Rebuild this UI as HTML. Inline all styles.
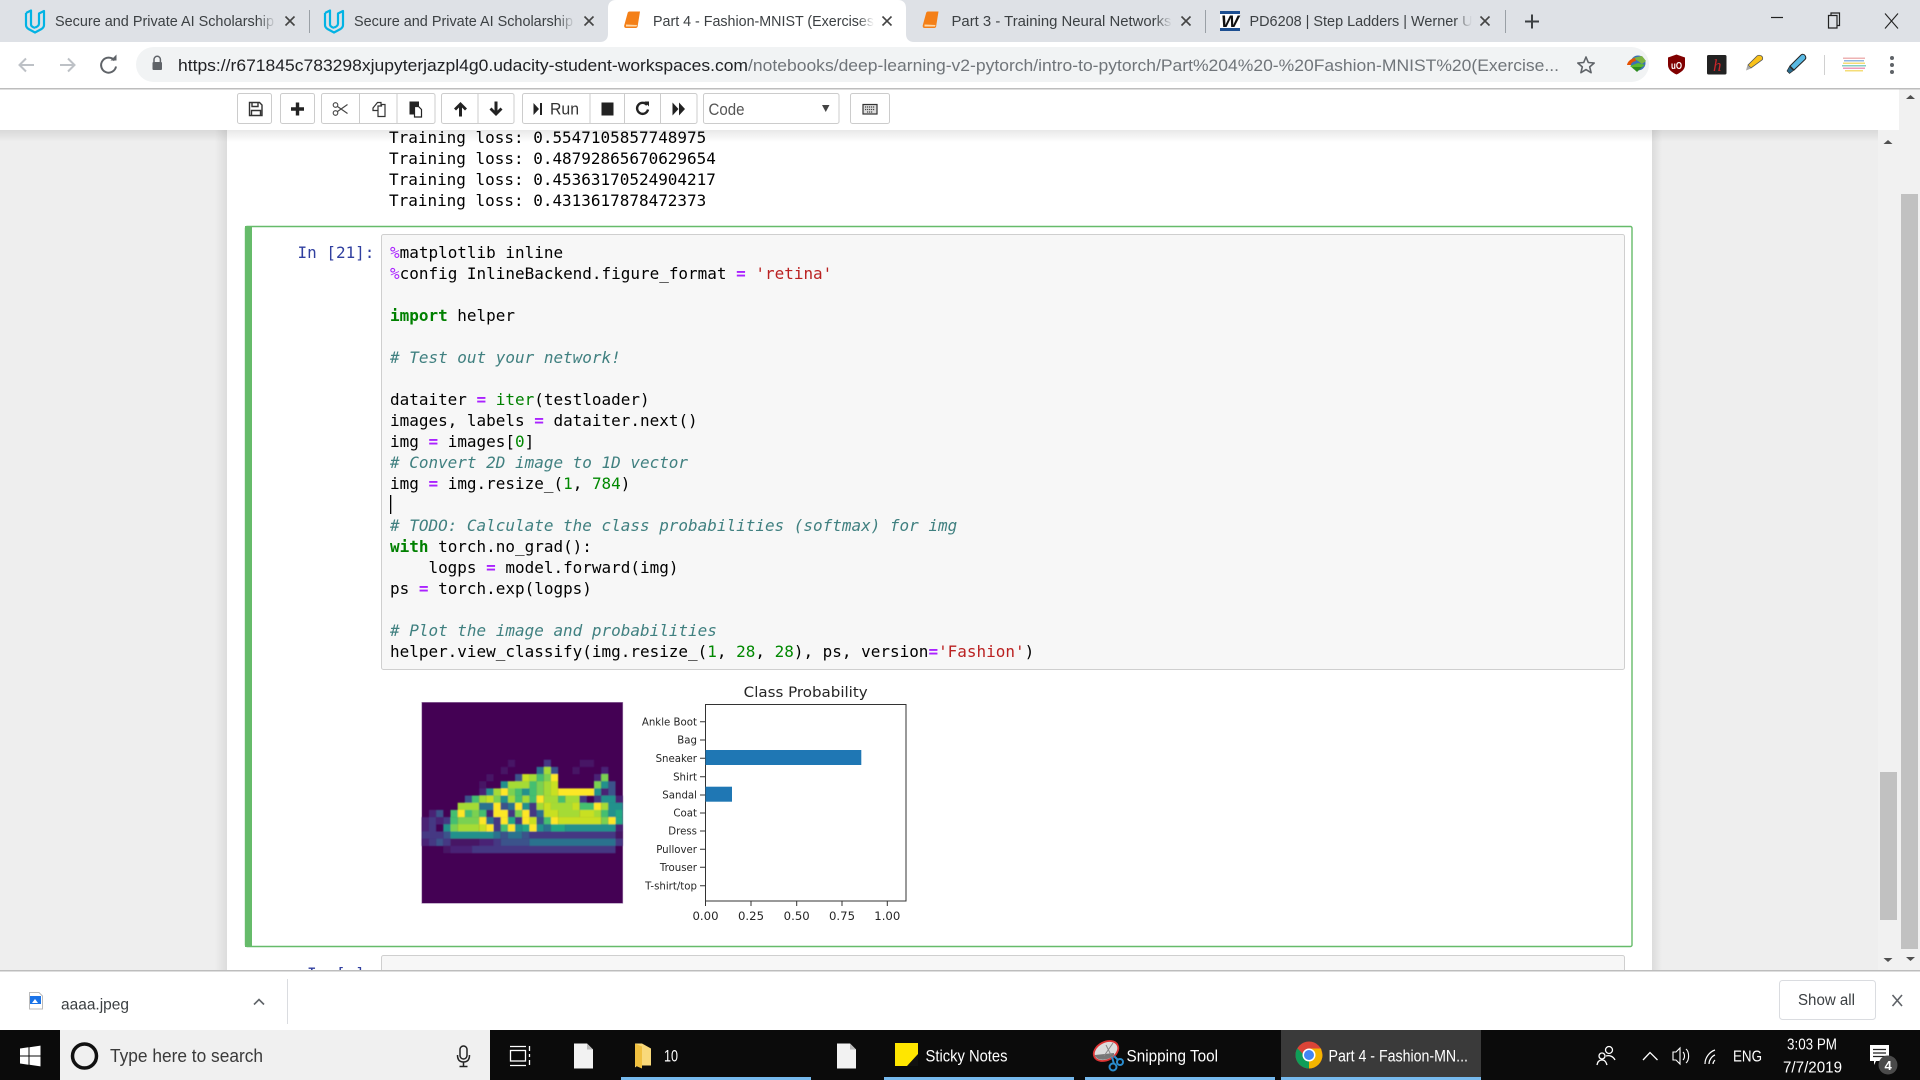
<!DOCTYPE html>
<html><head><meta charset="utf-8"><title>Part 4 - Fashion-MNIST</title>
<style>
html,body{margin:0;padding:0;width:1920px;height:1080px;overflow:hidden;background:#fff}
svg{display:block;position:absolute;left:0;top:0}
text{font-family:"Liberation Sans",sans-serif;white-space:pre}
.m{font-family:"DejaVu Sans Mono","Liberation Mono",monospace;font-size:15.97px;fill:#000}
.d{font-family:"DejaVu Sans",sans-serif;fill:#262626}
.t{font-size:15px;fill:#3c4043}
.k{fill:#008000;font-weight:bold}.o{fill:#a2f;font-weight:bold}.p{fill:#a2f}.c{fill:#408080;font-style:italic}.s{fill:#ba2121}.n{fill:#080}
.b{fill:#fff;stroke:#ccc;stroke-width:1}
.w{font-size:16.5px;fill:#fff}
.x{stroke:#444;stroke-width:1.6;fill:none}
.ps rect{height:1.03px}
.p1{fill:#471365}.p2{fill:#482475}.p3{fill:#443983}.p4{fill:#3b528b}.p5{fill:#2c728e}.p6{fill:#21918c}.p7{fill:#22a884}.p8{fill:#44bf70}.p9{fill:#7ad151}.pa{fill:#a5db36}.pb{fill:#c8e020}.pc{fill:#fde725}
</style></head><body>
<svg width="1920" height="1080" viewBox="0 0 1920 1080" xmlns="http://www.w3.org/2000/svg">
<defs>
<linearGradient id="f1" x1="0" x2="1"><stop offset="0" stop-color="#dee1e6" stop-opacity="0"/><stop offset="1" stop-color="#dee1e6"/></linearGradient>
<linearGradient id="f2" x1="0" x2="1"><stop offset="0" stop-color="#fff" stop-opacity="0"/><stop offset="1" stop-color="#fff"/></linearGradient>
<linearGradient id="sr" x1="0" x2="1"><stop offset="0" stop-color="#dcdcdc"/><stop offset="1" stop-color="#eee"/></linearGradient>
<linearGradient id="sl" x1="0" x2="1"><stop offset="0" stop-color="#eee"/><stop offset="1" stop-color="#dcdcdc"/></linearGradient>
<linearGradient id="st" x1="0" x2="0" y1="0" y2="1"><stop offset="0" stop-color="#000" stop-opacity=".09"/><stop offset="1" stop-color="#000" stop-opacity="0"/></linearGradient>
<filter id="bl" x="-2%" y="-2%" width="104%" height="104%"><feGaussianBlur stdDeviation=".09"/></filter>
</defs>

<!-- page background -->
<rect x="0" y="89" width="1920" height="881" fill="#eee"/>
<rect x="215" y="130" width="12" height="840" fill="url(#sl)"/>
<rect x="227" y="130" width="1425" height="840" fill="#fff"/>
<rect x="1652" y="130" width="10" height="840" fill="url(#sr)"/>

<!-- output -->
<text class="m" x="389" y="143">Training loss: 0.5547105857748975</text>
<text class="m" x="389" y="164">Training loss: 0.48792865670629654</text>
<text class="m" x="389" y="185">Training loss: 0.45363170524904217</text>
<text class="m" x="389" y="206">Training loss: 0.4313617878472373</text>
<rect x="0" y="130" width="1878" height="12" fill="url(#st)"/>

<!-- selected cell -->
<rect x="245.500" y="226.500" width="1386.500" height="720" fill="#fff" stroke="#66bb6a" stroke-width="1.400" rx="1.500"/>
<rect x="245" y="226" width="7" height="721" fill="#66bb6a"/>
<rect x="381.500" y="234.500" width="1243" height="435" fill="#f7f7f7" stroke="#cfcfcf" rx="2"/>
<text class="m" x="297.500" y="258" style="fill:#303f9f">In [21]:</text>

<text class="m" x="390" y="258"><tspan class="p">%</tspan>matplotlib inline</text>
<text class="m" x="390" y="279"><tspan class="p">%</tspan>config InlineBackend.figure_format <tspan class="o">=</tspan> <tspan class="s">'retina'</tspan></text>
<text class="m" x="390" y="321"><tspan class="k">import</tspan> helper</text>
<text class="m" x="390" y="363"><tspan class="c"># Test out your network!</tspan></text>
<text class="m" x="390" y="405">dataiter <tspan class="o">=</tspan> <tspan style="fill:#008000">iter</tspan>(testloader)</text>
<text class="m" x="390" y="426">images, labels <tspan class="o">=</tspan> dataiter.next()</text>
<text class="m" x="390" y="447">img <tspan class="o">=</tspan> images[<tspan class="n">0</tspan>]</text>
<text class="m" x="390" y="468"><tspan class="c"># Convert 2D image to 1D vector</tspan></text>
<text class="m" x="390" y="489">img <tspan class="o">=</tspan> img.resize_(<tspan class="n">1</tspan>, <tspan class="n">784</tspan>)</text>
<rect x="390" y="495" width="1.300" height="19" fill="#000"/>
<text class="m" x="390" y="531"><tspan class="c"># TODO: Calculate the class probabilities (softmax) for img</tspan></text>
<text class="m" x="390" y="552"><tspan class="k">with</tspan> torch.no_grad():</text>
<text class="m" x="390" y="573">    logps <tspan class="o">=</tspan> model.forward(img)</text>
<text class="m" x="390" y="594">ps <tspan class="o">=</tspan> torch.exp(logps)</text>
<text class="m" x="390" y="636"><tspan class="c"># Plot the image and probabilities</tspan></text>
<text class="m" x="390" y="657">helper.view_classify(img.resize_(<tspan class="n">1</tspan>, <tspan class="n">28</tspan>, <tspan class="n">28</tspan>), ps, version<tspan class="o">=</tspan><tspan class="s">'Fashion'</tspan>)</text>

<!-- shoe image -->
<rect x="421.800" y="702.300" width="201" height="201" fill="#440154" stroke="#a184ad" stroke-width=".6"/>
<g transform="translate(421.800 702.300) scale(7.175)" class="ps" filter="url(#bl)">
<g transform="translate(0 8)"><rect x="12" width="1" class="p1"/><rect x="17" width="1" class="p3"/><rect x="22" width="2" class="p1"/></g>
<g transform="translate(0 9)"><rect x="11" width="1" class="p1"/><rect x="16" width="1" class="p5"/><rect x="17" width="1" class="pa"/><rect x="18" width="1" class="p4"/><rect x="21" width="1" class="p1"/><rect x="25" width="1" class="p2"/></g>
<g transform="translate(0 10)"><rect x="9" width="1" class="p1"/><rect x="13" width="1" class="p4"/><rect x="14" width="1" class="pb"/><rect x="15" width="1" class="pa"/><rect x="16" width="1" class="p8"/><rect x="17" width="1" class="p9"/><rect x="18" width="1" class="pc"/><rect x="24" width="1" class="p2"/><rect x="25" width="1" class="p9"/></g>
<g transform="translate(0 11)"><rect x="8" width="1" class="p1"/><rect x="11" width="1" class="p6"/><rect x="12" width="3" class="pa"/><rect x="15" width="1" class="p8"/><rect x="16" width="1" class="p9"/><rect x="17" width="1" class="pa"/><rect x="18" width="1" class="pb"/><rect x="24" width="1" class="p9"/><rect x="25" width="1" class="p6"/><rect x="26" width="1" class="p4"/></g>
<g transform="translate(0 12)"><rect x="8" width="1" class="p2"/><rect x="9" width="1" class="p6"/><rect x="10" width="1" class="pa"/><rect x="11" width="1" class="pc"/><rect x="12" width="1" class="p9"/><rect x="13" width="1" class="p8"/><rect x="14" width="1" class="p6"/><rect x="15" width="1" class="p8"/><rect x="16" width="1" class="p9"/><rect x="17" width="1" class="pa"/><rect x="18" width="1" class="pb"/><rect x="19" width="5" class="pc"/><rect x="24" width="1" class="p6"/><rect x="25" width="1" class="p2"/><rect x="26" width="1" class="p4"/></g>
<g transform="translate(0 13)"><rect x="6" width="1" class="p4"/><rect x="7" width="1" class="p8"/><rect x="8" width="1" class="pa"/><rect x="9" width="1" class="pb"/><rect x="10" width="1" class="p9"/><rect x="11" width="1" class="p6"/><rect x="12" width="1" class="pa"/><rect x="13" width="1" class="p8"/><rect x="14" width="1" class="pa"/><rect x="15" width="1" class="p8"/><rect x="16" width="1" class="pc"/><rect x="17" width="2" class="pa"/><rect x="19" width="1" class="p8"/><rect x="20" width="2" class="pa"/><rect x="22" width="1" class="p3"/><rect x="24" width="1" class="p3"/><rect x="25" width="2" class="p6"/><rect x="27" width="1" class="p2"/></g>
<g transform="translate(0 14)"><rect x="5" width="3" class="pa"/><rect x="8" width="2" class="p5"/><rect x="10" width="1" class="pc"/><rect x="11" width="1" class="p4"/><rect x="12" width="1" class="p5"/><rect x="13" width="1" class="pc"/><rect x="14" width="1" class="p6"/><rect x="15" width="1" class="p3"/><rect x="16" width="1" class="pa"/><rect x="17" width="1" class="pb"/><rect x="18" width="3" class="pa"/><rect x="21" width="1" class="pb"/><rect x="22" width="2" class="p8"/><rect x="24" width="1" class="pc"/><rect x="25" width="1" class="pa"/><rect x="26" width="2" class="p6"/></g>
<g transform="translate(0 15)"><rect x="1" width="1" class="p2"/><rect x="2" width="1" class="p4"/><rect x="4" width="1" class="p8"/><rect x="5" width="1" class="pc"/><rect x="6" width="1" class="p8"/><rect x="7" width="1" class="p9"/><rect x="8" width="1" class="p8"/><rect x="9" width="1" class="p2"/><rect x="10" width="2" class="pc"/><rect x="12" width="1" class="p3"/><rect x="13" width="1" class="p9"/><rect x="14" width="1" class="pc"/><rect x="15" width="1" class="p3"/><rect x="16" width="1" class="p5"/><rect x="17" width="2" class="pb"/><rect x="19" width="3" class="pa"/><rect x="22" width="2" class="pb"/><rect x="24" width="1" class="pa"/><rect x="25" width="1" class="p8"/><rect x="26" width="1" class="p6"/><rect x="27" width="1" class="p7"/></g>
<g transform="translate(0 16)"><rect x="0" width="1" class="p2"/><rect x="1" width="1" class="p3"/><rect x="2" width="1" class="p2"/><rect x="3" width="1" class="p3"/><rect x="4" width="1" class="p8"/><rect x="5" width="3" class="p9"/><rect x="8" width="1" class="pc"/><rect x="9" width="1" class="p5"/><rect x="10" width="1" class="p3"/><rect x="11" width="1" class="pc"/><rect x="12" width="1" class="p7"/><rect x="13" width="1" class="p3"/><rect x="14" width="1" class="pc"/><rect x="15" width="1" class="pb"/><rect x="16" width="1" class="p4"/><rect x="17" width="1" class="p8"/><rect x="18" width="1" class="pc"/><rect x="19" width="6" class="pb"/><rect x="25" width="1" class="p9"/><rect x="26" width="1" class="pc"/><rect x="27" width="1" class="p7"/></g>
<g transform="translate(0 17)"><rect x="0" width="1" class="p2"/><rect x="1" width="1" class="p3"/><rect x="3" width="1" class="p6"/><rect x="4" width="1" class="p9"/><rect x="5" width="3" class="pa"/><rect x="8" width="1" class="pb"/><rect x="9" width="1" class="pc"/><rect x="10" width="1" class="p3"/><rect x="11" width="1" class="p8"/><rect x="12" width="1" class="pc"/><rect x="13" width="1" class="p6"/><rect x="14" width="1" class="p7"/><rect x="15" width="1" class="pc"/><rect x="16" width="1" class="p6"/><rect x="17" width="1" class="p5"/><rect x="18" width="2" class="p7"/><rect x="20" width="7" class="p6"/><rect x="27" width="1" class="p2"/></g>
<g transform="translate(0 18)"><rect x="0" width="3" class="p3"/><rect x="3" width="1" class="p4"/><rect x="4" width="6" class="p6"/><rect x="10" width="1" class="p5"/><rect x="11" width="1" class="p4"/><rect x="12" width="2" class="p5"/><rect x="14" width="1" class="p4"/><rect x="15" width="12" class="p3"/><rect x="27" width="1" class="p1"/></g>
<g transform="translate(0 19)"><rect x="0" width="1" class="p2"/><rect x="1" width="1" class="p3"/><rect x="2" width="1" class="p4"/><rect x="3" width="1" class="p3"/><rect x="4" width="4" class="p1"/><rect x="8" width="2" class="p2"/><rect x="10" width="1" class="p3"/><rect x="11" width="4" class="p4"/><rect x="15" width="12" class="p5"/><rect x="27" width="1" class="p3"/></g>
<g transform="translate(0 20)"><rect x="3" width="1" class="p1"/><rect x="4" width="3" class="p2"/><rect x="7" width="20" class="p3"/></g>
</g>

<!-- chart -->
<rect x="705.500" y="704.500" width="200.500" height="196.500" fill="#fff" stroke="#333" stroke-width="1"/>
<rect x="705.500" y="750" width="155.800" height="15" fill="#1f77b4"/>
<rect x="705.500" y="786.700" width="26.500" height="15" fill="#1f77b4"/>
<text class="d" x="805.700" y="697" text-anchor="middle" font-size="14" textLength="124" lengthAdjust="spacingAndGlyphs">Class Probability</text>
<g stroke="#333" stroke-width="1">
<path d="M700 721.700h5M700 740h5M700 758.300h5M700 776.700h5M700 795h5M700 813h5M700 831h5M700 849.300h5M700 867.300h5M700 885.700h5"/>
<path d="M705.500 901v5M751 901v5M796.700 901v5M842 901v5M887.300 901v5"/>
</g>
<g font-size="10.200" text-anchor="end">
<text class="d" x="697" y="725.300">Ankle Boot</text>
<text class="d" x="697" y="743.600">Bag</text>
<text class="d" x="697" y="761.900">Sneaker</text>
<text class="d" x="697" y="780.300">Shirt</text>
<text class="d" x="697" y="798.600">Sandal</text>
<text class="d" x="697" y="816.600">Coat</text>
<text class="d" x="697" y="834.600">Dress</text>
<text class="d" x="697" y="852.900">Pullover</text>
<text class="d" x="697" y="870.900">Trouser</text>
<text class="d" x="697" y="889.300">T-shirt/top</text>
</g>
<g font-size="11.700" text-anchor="middle">
<text class="d" x="705.500" y="920">0.00</text>
<text class="d" x="751" y="920">0.25</text>
<text class="d" x="796.700" y="920">0.50</text>
<text class="d" x="842" y="920">0.75</text>
<text class="d" x="887.300" y="920">1.00</text>
</g>

<!-- next cell -->
<rect x="381.500" y="955.500" width="1243" height="40" fill="#f7f7f7" stroke="#cfcfcf" rx="2"/>
<text class="m" x="307" y="979" style="fill:#303f9f">In [ ]:</text>

<!-- inner scrollbar -->
<rect x="1878" y="130" width="21" height="840" fill="#f1f1f1"/>
<rect x="1880" y="772" width="17" height="148" fill="#c1c1c1"/>
<path d="M1883.500 144h9l-4.500-4z" fill="#505050"/>
<path d="M1883.500 958h9l-4.500 4z" fill="#505050"/>

<!-- toolbar -->
<rect x="0" y="89" width="1899" height="41" fill="#fff"/>
<rect class="b" x="237.500" y="93.500" width="34" height="30" rx="2"/>
<rect class="b" x="280.500" y="93.500" width="34" height="30" rx="2"/>
<rect class="b" x="321.500" y="93.500" width="113.500" height="30" rx="2"/>
<rect class="b" x="441.500" y="93.500" width="72.500" height="30" rx="2"/>
<rect class="b" x="522.500" y="93.500" width="174.500" height="30" rx="2"/>
<rect class="b" x="703.500" y="93.500" width="135.500" height="30" rx="2"/>
<rect class="b" x="850.500" y="93.500" width="39" height="30" rx="2"/>
<path d="M359.500 94v29M397 94v29M478 94v29M590 94v29M624.500 94v29M660.500 94v29" stroke="#ccc"/>
<!-- save -->
<path d="M249.500 102.500h10l2.500 2.500v10.500h-12.500z M252 102.500v4h6v-4M251.500 115.500v-5h9v5" fill="#fff" stroke="#333" stroke-width="1.400"/>
<!-- plus -->
<path d="M297.500 102.500v13M291 109h13" stroke="#222" stroke-width="3.400"/>
<!-- cut -->
<g fill="none" stroke="#444" stroke-width="1.100"><circle cx="335.500" cy="105" r="2.300"/><circle cx="335.500" cy="113" r="2.300"/><path d="M337.500 106.500l10 7M337.500 111.500l10-7"/></g>
<!-- copy -->
<path d="M373 108l4.500-5.500h3.500v8h-8z" fill="#fff" stroke="#333" stroke-width="1.200"/>
<path d="M378 106h3.500v-1.500h3.500v12h-7z" fill="#fff" stroke="#333" stroke-width="1.200"/>
<!-- paste -->
<rect x="409.500" y="101.500" width="9.500" height="13" fill="#222"/>
<path d="M414.500 106.500h4l3 3v7.500h-7z" fill="#fff" stroke="#222" stroke-width="1.200"/>
<!-- arrows -->
<path d="M460.500 102l-6.500 6.500 2 2 3-3v9h3v-9l3 3 2-2z" fill="#222"/>
<path d="M496 116l-6.500-6.500 2-2 3 3v-9h3v9l3-3 2 2z" fill="#222"/>
<!-- run -->
<path d="M533.500 103l5.500 6-5.500 6z M540 103h2v12h-2z" fill="#222"/>
<text x="550" y="114.500" font-size="16.500" fill="#333" textLength="29" lengthAdjust="spacingAndGlyphs">Run</text>
<rect x="601.500" y="102.500" width="12" height="13" fill="#222"/>
<path d="M647 105a5.500 5.500 0 1 0 1 4.500" fill="none" stroke="#222" stroke-width="2.400"/><path d="M644.500 101.500l4.500 0v5z" fill="#222"/>
<path d="M672.500 102.500l6 6.500-6 6.500z M679 102.500l6 6.500-6 6.500z" fill="#222"/>
<text x="708.500" y="115" font-size="16.500" fill="#555" textLength="36" lengthAdjust="spacingAndGlyphs">Code</text>
<path d="M822 105h7.500l-3.750 7z" fill="#444"/>
<rect x="863" y="104.500" width="14" height="9.500" fill="#ddd" stroke="#333" stroke-width="1.200"/>
<path d="M865 107h10M865 109.500h10M867 112h6" stroke="#444" stroke-width="1.200" stroke-dasharray="1.200 .8"/>

<!-- outer scrollbar -->
<rect x="1899" y="89" width="21" height="881" fill="#f1f1f1"/>
<rect x="1901" y="194" width="17" height="755" fill="#c1c1c1"/>
<path d="M1906 99h9l-4.500-4z" fill="#505050"/>
<path d="M1906 957h9l-4.500 4z" fill="#505050"/>

<!-- tab strip -->
<rect x="0" y="0" width="1920" height="42" fill="#dee1e6"/>
<path d="M600 42c5 0 8-3 8-8V8c0-5 3-8 8-8h282c5 0 8 3 8 8v26c0 5 3 8 8 8z" fill="#fff"/>
<path d="M309.500 10v23M1205.500 10v23M1505.500 10v23" stroke="#9aa0a6"/>
<!-- udacity icons -->
<g fill="none" stroke="#02b3e4" stroke-width="2.200" stroke-linejoin="round"><path d="M26 13v12c0 2 1 3 2.500 4l6.500 3.500 6.500-3.500c1.500-1 2.500-2 2.500-4V11l-5 2.500v10c0 2-2 3.500-4 4M26 13l5-2.500v14c0 1.500 1 2.500 4 3.500"/></g>
<g transform="translate(299 0)" fill="none" stroke="#02b3e4" stroke-width="2.200" stroke-linejoin="round"><path d="M26 13v12c0 2 1 3 2.500 4l6.500 3.500 6.500-3.500c1.500-1 2.500-2 2.500-4V11l-5 2.500v10c0 2-2 3.500-4 4M26 13l5-2.500v14c0 1.500 1 2.500 4 3.500"/></g>
<!-- tab text -->
<text class="t" x="55" y="26" textLength="219" lengthAdjust="spacingAndGlyphs">Secure and Private AI Scholarship</text>
<rect x="258" y="10" width="18" height="22" fill="url(#f1)"/>
<text class="t" x="354" y="26" textLength="219" lengthAdjust="spacingAndGlyphs">Secure and Private AI Scholarship</text>
<rect x="557" y="10" width="18" height="22" fill="url(#f1)"/>
<text class="t" x="653" y="26" textLength="221" lengthAdjust="spacingAndGlyphs">Part 4 - Fashion-MNIST (Exercises</text>
<rect x="858" y="10" width="16" height="22" fill="url(#f2)"/>
<text class="t" x="951.500" y="26" textLength="220" lengthAdjust="spacingAndGlyphs">Part 3 - Training Neural Networks</text>
<rect x="1155" y="10" width="17" height="22" fill="url(#f1)"/>
<text class="t" x="1249.500" y="26" textLength="223" lengthAdjust="spacingAndGlyphs">PD6208 | Step Ladders | Werner U</text>
<rect x="1455" y="10" width="17" height="22" fill="url(#f1)"/>
<!-- book icons -->
<g><path d="M627.500 13.500c0-1 1-2 2-2h10.500l-2.300 14.500c0 1.200-1 2-2 2h-9.500c-1.500 0-2.200-1-2-2.500z" fill="#f47f17"/><path d="M626 24.500l11 .5-.5 1.500h-10.500z" fill="#ffd9a8"/></g>
<g transform="translate(298.500 0)"><path d="M627.500 13.500c0-1 1-2 2-2h10.500l-2.300 14.500c0 1.200-1 2-2 2h-9.500c-1.500 0-2.200-1-2-2.500z" fill="#f47f17"/><path d="M626 24.500l11 .5-.5 1.500h-10.500z" fill="#ffd9a8"/></g>
<!-- W icon -->
<rect x="1220" y="11" width="20" height="20" fill="#fff"/>
<rect x="1220" y="11" width="20" height="3" fill="#1d4f91"/><rect x="1220" y="28" width="20" height="3" fill="#1d4f91"/>
<text x="1221" y="27" font-size="17" font-weight="bold" font-style="italic" fill="#111" textLength="18" lengthAdjust="spacingAndGlyphs">W</text>
<!-- close x -->
<g class="x"><path d="M285.500 16.500l9 9M294.500 16.500l-9 9"/><path d="M584.500 16.500l9 9M593.500 16.500l-9 9"/><path d="M882.500 16.500l9 9M891.500 16.500l-9 9"/><path d="M1181.500 16.500l9 9M1190.500 16.500l-9 9"/><path d="M1480.500 16.500l9 9M1489.500 16.500l-9 9"/></g>
<path d="M1532 14.500v14M1525 21.500h14" stroke="#3c4043" stroke-width="2"/>
<!-- window controls -->
<path d="M1771 17.500h12" stroke="#222" stroke-width="1.200"/>
<path d="M1828.500 15.500h8.500v12.500h-8.500zM1831 15.500v-2.500h8.500v12.500h-2.500" fill="none" stroke="#222" stroke-width="1.200"/>
<path d="M1885 13.500l13 15M1898 13.500l-13 15" stroke="#222" stroke-width="1.100" fill="none"/>

<!-- address bar -->
<rect x="0" y="42" width="1920" height="46" fill="#fff"/>
<rect x="0" y="88" width="1920" height="1.500" fill="#bdbdbd"/>
<rect x="136" y="47" width="1513" height="35" rx="17.500" fill="#f1f3f4"/>
<path d="M34 65H20M26 58.500L19.500 65l6.500 6.500" fill="none" stroke="#bdc1c6" stroke-width="2"/>
<path d="M60 65h14M68 58.500l6.500 6.500-6.500 6.500" fill="none" stroke="#bdc1c6" stroke-width="2"/>
<path d="M114.500 60.500a7.500 7.500 0 1 0 1.500 6" fill="none" stroke="#5f6368" stroke-width="2"/><path d="M110.500 60.500h6v-6z" fill="#5f6368"/>
<path d="M154 62v-2.500a3.200 3.200 0 0 1 6.400 0V62" fill="none" stroke="#5f6368" stroke-width="1.500"/><rect x="152.500" y="62" width="9.500" height="8" rx="1" fill="#5f6368"/>
<text x="178" y="71" font-size="17" fill="#202124" textLength="570" lengthAdjust="spacingAndGlyphs">https://r671845c783298xjupyterjazpl4g0.udacity-student-workspaces.com</text>
<text x="748" y="71" font-size="17" fill="#70757a" textLength="811" lengthAdjust="spacingAndGlyphs">/notebooks/deep-learning-v2-pytorch/intro-to-pytorch/Part%204%20-%20Fashion-MNIST%20(Exercise...</text>
<path d="M1586 57l2.300 5.500 5.900.5-4.500 3.900 1.400 5.800-5.100-3.100-5.100 3.100 1.400-5.800-4.500-3.900 5.900-.5z" fill="none" stroke="#5f6368" stroke-width="1.600" stroke-linejoin="round"/>
<!-- extensions -->
<circle cx="1638" cy="63" r="7.500" fill="#3b6fb5"/><path d="M1633 58l9-2 4 5-4 3-4-3z" fill="#7cb342"/>
<path d="M1627 65a10 8 0 0 1 8-7l1 3c-3 .5-5 2-5 4z" fill="#e65100"/><path d="M1630 66l8-3 7 2-9 6z" fill="#5cb82e"/><path d="M1632 67h10l-5 5z" fill="#2e8b20"/>
<path d="M1676.500 54.500l8.500 3v7.500c0 4.500-4 7.500-8.500 9.500-4.500-2-8.500-5-8.500-9.500V57.500z" fill="#800000"/>
<text x="1671" y="69" font-size="10" font-weight="bold" fill="#fff" textLength="11" lengthAdjust="spacingAndGlyphs">uO</text>
<rect x="1707" y="55" width="19.500" height="19.500" rx="1.500" fill="#222"/>
<text x="1713" y="71" font-size="17" font-style="italic" fill="#c8262a" style="font-family:'Liberation Serif',serif">h</text>
<path d="M1751 68l-3-3 9-9c1-1 3-1 4.500 0s1.500 3 .5 4z" fill="#f9c21a" stroke="#555" stroke-width=".8"/><path d="M1747.500 65l3.500 3.500-5 2z" fill="#aaa"/>
<path d="M1794 70l-4-4 11-11c1-1 3-1 4 .5s1 3 0 4z" fill="#59b9e3" stroke="#222" stroke-width="1"/><path d="M1789.500 66.500l4 4-4 3-2.500-2.500z" fill="#2a6a8a" stroke="#222" stroke-width=".6"/>
<path d="M1824.500 55v20" stroke="#d0d0d0"/>
<g opacity=".75"><rect x="1843" y="57.500" width="22" height="1.500" fill="#e99a9a"/><rect x="1844" y="60" width="20" height="1.500" fill="#6aa0d8"/><rect x="1843" y="62.500" width="22" height="1.500" fill="#f2d24a"/><rect x="1842" y="65" width="24" height="1.500" fill="#60c0b0"/><rect x="1843" y="67.500" width="22" height="1.500" fill="#e878a8"/><rect x="1845" y="70" width="18" height="1.500" fill="#f2d24a"/></g>
<circle cx="1892" cy="58" r="2" fill="#5f6368"/><circle cx="1892" cy="65" r="2" fill="#5f6368"/><circle cx="1892" cy="72" r="2" fill="#5f6368"/>

<!-- download bar -->
<rect x="0" y="970" width="1920" height="60" fill="#fff"/>
<rect x="0" y="970" width="1920" height="1.500" fill="#bdbdbd"/>
<path d="M29.500 992.500h9.500l3.500 3.500v13h-13z" fill="#fff" stroke="#bbb"/><rect x="30" y="996" width="11" height="8" fill="#1a73e8"/><path d="M32 1003l3-4 3 4z" fill="#fff"/>
<text x="61" y="1009.500" font-size="16" fill="#3c4043" textLength="68" lengthAdjust="spacingAndGlyphs">aaaa.jpeg</text>
<path d="M254 1004.500l5-5 5 5" fill="none" stroke="#5f6368" stroke-width="1.600"/>
<path d="M287.500 979v45" stroke="#dadce0"/>
<rect x="1779.500" y="980.500" width="96" height="39" rx="3" fill="#fff" stroke="#dadce0"/>
<text x="1798" y="1005" font-size="15.500" fill="#3c4043" textLength="57" lengthAdjust="spacingAndGlyphs">Show all</text>
<path d="M1892.500 995l9.500 11M1902 995l-9.500 11" stroke="#5f6368" stroke-width="1.600"/>

<!-- taskbar -->
<rect x="0" y="1030" width="1920" height="50" fill="#0b0b0b"/>
<path d="M20 1048.500l8.500-1.200v8.200H20zM29.500 1047.200l11-1.600v9.900h-11zM20 1056.500h8.500v8.200l-8.500-1.200zM29.500 1056.500h11v9.900l-11-1.600z" fill="#fff"/>
<rect x="60" y="1030" width="430" height="50" fill="#f0f0f0"/>
<circle cx="84.500" cy="1056" r="12" fill="none" stroke="#111" stroke-width="3.500"/>
<text x="110" y="1062" font-size="18.500" fill="#3a3a3a" textLength="153" lengthAdjust="spacingAndGlyphs">Type here to search</text>
<rect x="460" y="1046" width="7" height="13" rx="3.500" fill="none" stroke="#222" stroke-width="1.500"/>
<path d="M457.500 1055c0 5 2.500 7 6 7s6-2 6-7M463.500 1062v4M459.500 1066.500h8" fill="none" stroke="#222" stroke-width="1.500"/>
<g fill="none" stroke="#fff" stroke-width="1.300"><path d="M510 1046.500h16M510 1065.500h16"/><rect x="510.500" y="1050.500" width="15" height="10.500"/><path d="M529.500 1046v5M529.500 1054v3M529.500 1060v5"/></g>
<path d="M574 1043.500h13l6 6v19h-19z" fill="#f2f2f2"/><path d="M587 1043.500l6 6h-6z" fill="#bbb"/>
<path d="M635 1043.500h7l9 5v17h-13.500l-2.500 2z" fill="#f9d97a"/><path d="M635 1043.500l7 3v22l-7-3z" fill="#f0c040"/>
<text class="w" x="664" y="1061.500" textLength="14" lengthAdjust="spacingAndGlyphs">10</text>
<path d="M837 1043.500h13l6 6v19h-19z" fill="#f2f2f2"/><path d="M850 1043.500l6 6h-6z" fill="#bbb"/>
<rect x="895" y="1043" width="23" height="23" fill="#ffe600"/><path d="M918 1054v12h-11z" fill="#111"/>
<text class="w" x="925.500" y="1061.500" textLength="82" lengthAdjust="spacingAndGlyphs">Sticky Notes</text>
<g><ellipse cx="1106" cy="1051" rx="13" ry="9" transform="rotate(-28 1106 1051)" fill="#ddd" stroke="#d33" stroke-width="1.800"/><path d="M1095 1056c4 6 14 4 19-1v-2l-19 2z" fill="#777"/><path d="M1106 1045l5 10M1113 1043l-9 13" stroke="#888" fill="none"/><g fill="none" stroke="#2a8ccd" stroke-width="2"><circle cx="1113" cy="1067" r="3.500"/><circle cx="1120" cy="1062" r="3"/><path d="M1114 1064l-2-7M1118 1060l-4-4"/></g></g>
<text class="w" x="1126.500" y="1061.500" textLength="91.500" lengthAdjust="spacingAndGlyphs">Snipping Tool</text>
<rect x="1281" y="1030" width="200" height="50" fill="#3a3a3a"/>
<circle cx="1309" cy="1055" r="13.500" fill="#db4437"/>
<path d="M1309 1055l-11.700 6.700A13.500 13.500 0 0 0 1309 1068.500z" fill="#0f9d58"/><path d="M1297.300 1061.700A13.500 13.500 0 0 1 1297.300 1048.300L1304 1055l-1 5z" fill="#0f9d58"/>
<path d="M1309 1055l0 13.500A13.500 13.500 0 0 0 1322.500 1055L1321 1048.500h-12z" fill="#f4b400"/>
<circle cx="1309" cy="1055" r="6.500" fill="#fff"/><circle cx="1309" cy="1055" r="5" fill="#4285f4"/>
<text class="w" x="1328.500" y="1061.500" textLength="139.500" lengthAdjust="spacingAndGlyphs">Part 4 - Fashion-MN...</text>
<g fill="#76b9ed"><rect x="621" y="1077" width="190" height="3"/><rect x="884" y="1077" width="190" height="3"/><rect x="1085" y="1077" width="190" height="3"/><rect x="1281" y="1077" width="200" height="3"/></g>
<g fill="none" stroke="#fff" stroke-width="1.300">
<circle cx="1609" cy="1050" r="3.500"/><circle cx="1602" cy="1056" r="3"/><path d="M1597 1065c.5-3 2-5 5-5s4 2 5 5M1606 1056c3-1 7 0 9 4"/>
<path d="M1643 1060l7-7.500 7.500 7.500"/>
<path d="M1673 1052h3l4-4v16l-4-4h-3zM1683 1052c2 2 2 6 0 8M1686 1049c3.500 3 3.500 11 0 14" stroke-width="1.100"/>
<path d="M1705 1064c0-6 4-12 10-14M1709 1064c0-4 3-8 6-9M1713 1064c0-2 1-3 2-4" stroke-width="1.200"/>
</g>
<text x="1733" y="1061.500" font-size="15.500" fill="#fff" textLength="29" lengthAdjust="spacingAndGlyphs">ENG</text>
<text x="1787" y="1049.500" font-size="15.500" fill="#fff" textLength="50" lengthAdjust="spacingAndGlyphs">3:03 PM</text>
<text x="1783" y="1072.500" font-size="15.500" fill="#fff" textLength="59" lengthAdjust="spacingAndGlyphs">7/7/2019</text>
<path d="M1870 1045h19v16h-13l-2 4v-4h-4z" fill="#fff"/><path d="M1873 1049.500h13M1873 1053h13M1873 1056.500h13" stroke="#222" stroke-width="1.200"/>
<circle cx="1888" cy="1065" r="9.500" fill="#4a4a4a"/>
<text x="1884.500" y="1070" font-size="13" font-weight="bold" fill="#fff">4</text>
</svg>
</body></html>
